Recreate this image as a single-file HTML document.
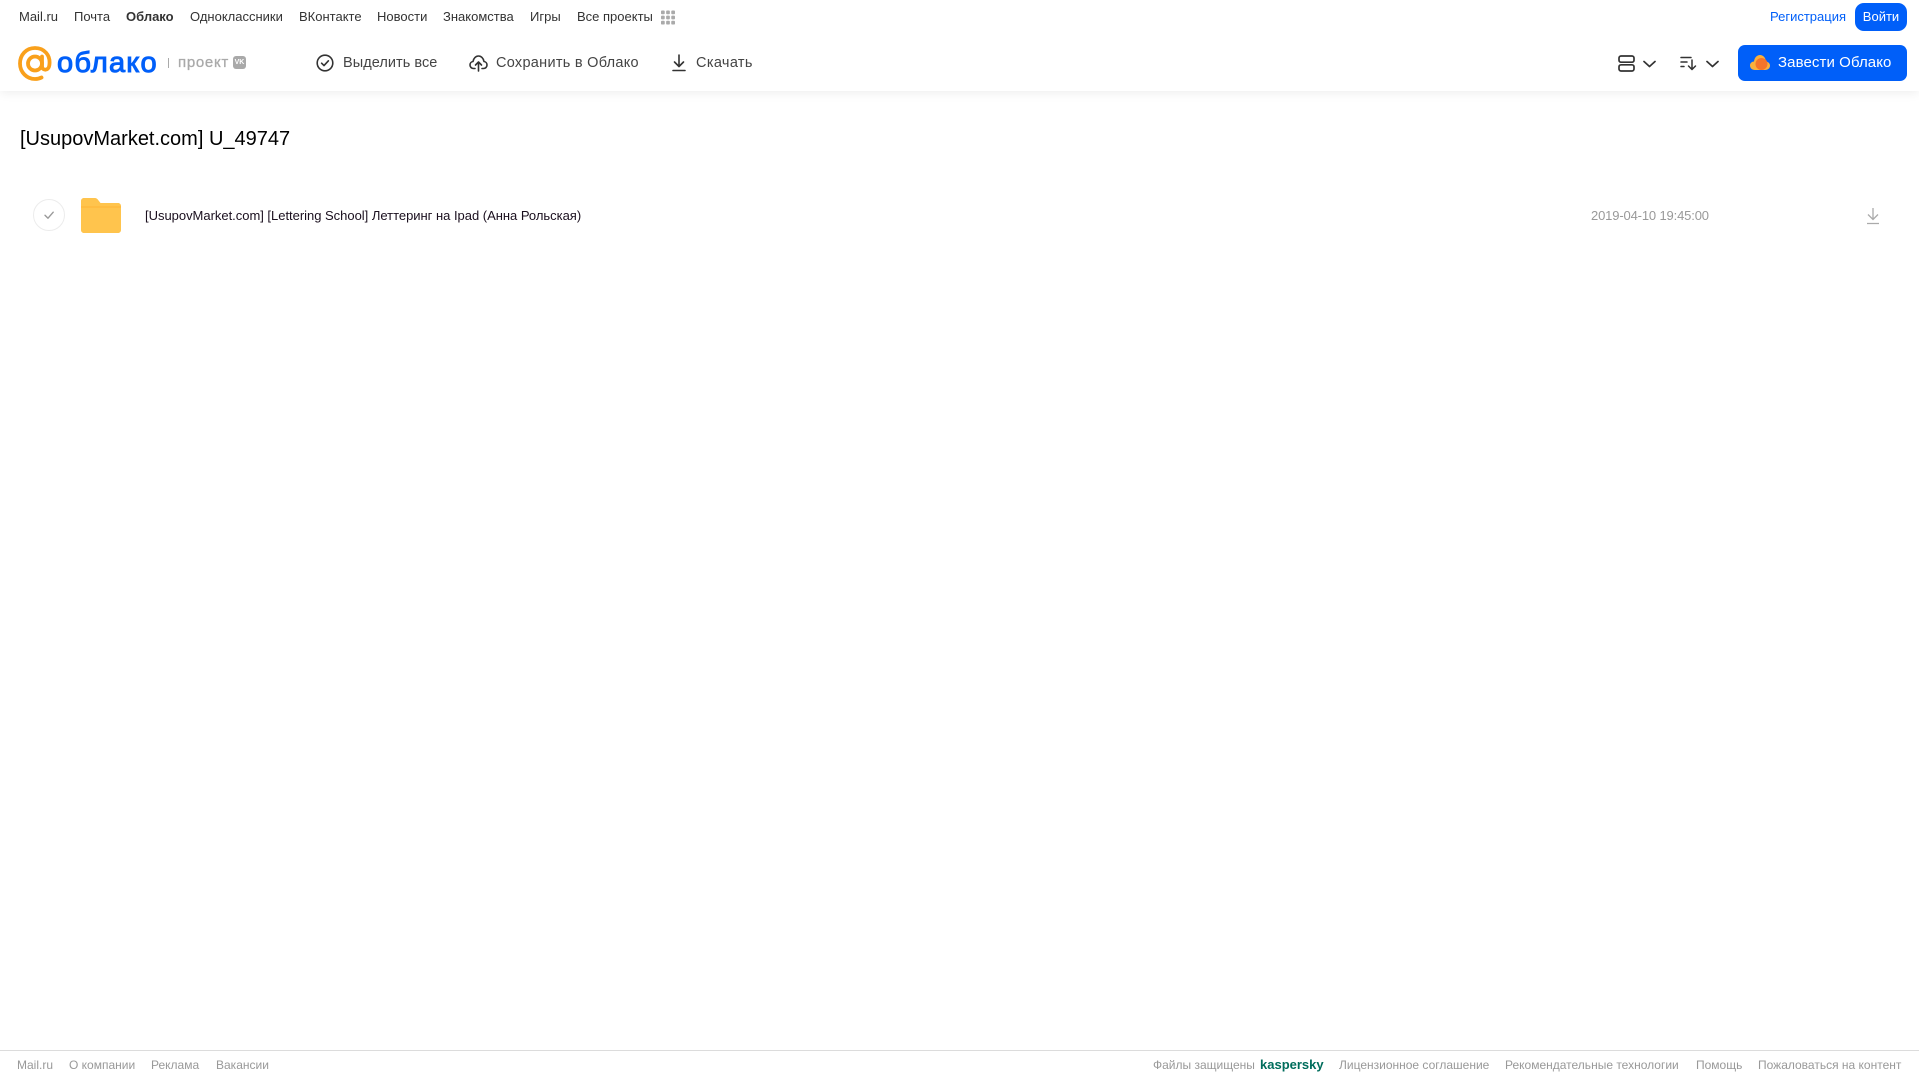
<!DOCTYPE html>
<html lang="ru"><head><meta charset="utf-8"><title>Облако</title>
<style>
html,body{margin:0;padding:0;background:#fff}
body{width:1919px;height:1079px;position:relative;overflow:hidden;font-family:"Liberation Sans",Arial,sans-serif;color:#2c2d2e}
.t{position:absolute;white-space:nowrap;line-height:20px}
.n{top:7px;font-size:13px;color:#333}
.b{top:53px;font-size:14.5px;color:#444;letter-spacing:.28px}
.f{top:1055px;font-size:12px;color:#999}
svg{position:absolute;display:block}
#hd{position:absolute;left:0;top:0;width:1919px;height:91px;background:#fff;box-shadow:0 2px 10px rgba(0,0,0,.07)}
</style></head><body>
<div id="hd"></div>
<span class="t n" style="left:19px">Mail.ru</span>
<span class="t n" style="left:74px">Почта</span>
<span class="t n" style="left:126px;font-weight:700">Облако</span>
<span class="t n" style="left:190px">Одноклассники</span>
<span class="t n" style="left:299px">ВКонтакте</span>
<span class="t n" style="left:377px">Новости</span>
<span class="t n" style="left:443px">Знакомства</span>
<span class="t n" style="left:530px">Игры</span>
<span class="t n" style="left:577px">Все проекты</span>
<svg style="left:661px;top:10px" width="14" height="15" viewBox="0 0 15 15" fill="#aaa"><rect x="0" y="0" width="4" height="4" rx="1"/><rect x="5.5" y="0" width="4" height="4" rx="1"/><rect x="11" y="0" width="4" height="4" rx="1"/><rect x="0" y="5.5" width="4" height="4" rx="1"/><rect x="5.5" y="5.5" width="4" height="4" rx="1"/><rect x="11" y="5.5" width="4" height="4" rx="1"/><rect x="0" y="11" width="4" height="4" rx="1"/><rect x="5.5" y="11" width="4" height="4" rx="1"/><rect x="11" y="11" width="4" height="4" rx="1"/></svg>
<span class="t n" style="left:1770px;color:#005ff9">Регистрация</span>
<div style="position:absolute;left:1855px;top:3px;width:52px;height:28px;background:#005ff9;border-radius:9px;color:#fff;font-size:13px;line-height:28px;text-align:center">Войти</div>

<svg style="left:18px;top:46px" width="34" height="35" viewBox="0 0 34 35" fill="none" stroke="#f9a01b" stroke-width="3.800"><circle cx="17" cy="17.5" r="7"/><path d="M24 10.5v9.5c0 5 6.500 5 7.300-.5C33 9 26 2 17 2 8 2 2 9 2 17.500 2 26.500 9 33 17 33c2.500 0 4.500-.5 6.500-1.500" stroke-linecap="round"/></svg>
<span class="t" style="left:57px;top:45px;line-height:36px;font-size:29px;font-weight:400;-webkit-text-stroke:1px #005ff9;color:#005ff9;letter-spacing:1.2px">облако</span>
<div style="position:absolute;left:168px;top:58px;width:1px;height:10px;background:#aaa"></div>
<span class="t" style="left:178px;top:53px;font-size:15px;font-weight:400;-webkit-text-stroke:.3px #a9a9a9;color:#a9a9a9;letter-spacing:.7px">проект</span>
<div style="position:absolute;left:233px;top:56px;width:13px;height:13px;background:#a9a9a9;border-radius:3px;color:#fff;font-size:7px;line-height:13px;text-align:center;font-weight:700">VK</div>

<svg style="left:316px;top:54px" width="18" height="18" viewBox="0 0 18 18" fill="none" stroke="#333" stroke-width="1.600"><circle cx="9" cy="9" r="7.800"/><path d="M5.600 9.200l2.400 2.400 4.400-4.800" stroke-linecap="round" stroke-linejoin="round"/></svg>
<span class="t b" style="left:343px;letter-spacing:.05px">Выделить все</span>
<svg style="left:469px;top:54px" width="19" height="18" viewBox="0 0 19 18" fill="none" stroke="#333" stroke-width="1.600" stroke-linecap="round" stroke-linejoin="round"><path d="M6 14.500H4.500C2.500 14.500 1 13 1 11c0-1.800 1.300-3.300 3-3.500C4.500 4.200 6.800 2 9.500 2s5 2.200 5.500 5.500c1.700.2 3 1.700 3 3.500 0 2-1.500 3.500-3.500 3.500H13"/><path d="M9.500 17V8.500M6.500 11l3-3 3 3"/></svg>
<span class="t b" style="left:496px">Сохранить в Облако</span>
<svg style="left:671px;top:54px" width="16" height="18" viewBox="0 0 16 18" fill="none" stroke="#333" stroke-width="1.600" stroke-linecap="round" stroke-linejoin="round"><path d="M8 1v11M3.500 8L8 12.500 12.500 8M2 16.500h12"/></svg>
<span class="t b" style="left:696px;letter-spacing:.35px">Скачать</span>

<svg style="left:1618px;top:55px" width="17" height="17" viewBox="0 0 17 17" fill="none" stroke="#333" stroke-width="1.700"><rect x="1" y="1" width="15" height="6.200" rx="2"/><rect x="1" y="9.800" width="15" height="6.200" rx="2"/></svg>
<svg style="left:1643px;top:60px" width="13" height="8" viewBox="0 0 13 8" fill="none" stroke="#333" stroke-width="1.700" stroke-linecap="round" stroke-linejoin="round"><path d="M1 1.500l5.500 5 5.500-5"/></svg>
<svg style="left:1680px;top:56px" width="17" height="15" viewBox="0 0 17 15" fill="none" stroke="#333" stroke-width="1.500" stroke-linecap="round" stroke-linejoin="round"><path d="M1 1.500h10M1 6h6M1 10.500h3M12 4v9.500M8.500 10l3.500 3.500 3.500-3.500"/></svg>
<svg style="left:1706px;top:60px" width="13" height="8" viewBox="0 0 13 8" fill="none" stroke="#333" stroke-width="1.700" stroke-linecap="round" stroke-linejoin="round"><path d="M1 1.500l5.500 5 5.500-5"/></svg>

<div style="position:absolute;left:1738px;top:45px;width:169px;height:36px;background:#005ff9;border-radius:7px"></div>
<svg style="left:1750px;top:54px" width="20" height="17" viewBox="0 0 20 17"><path d="M5 16C2 16 0 14 0 11.500 0 9 2 7.500 4 7.500 4.500 3.500 7 1 10 1s5.500 2.500 6 6.500c2.200.3 4 1.800 4 4 0 2.700-2 4.500-5 4.500z" fill="#fbb03b"/><circle cx="11.500" cy="10" r="6" fill="#f5742a"/></svg>
<span class="t b" style="left:1778px;color:#fff;font-size:15px;top:53px;letter-spacing:.09px">Завести Облако</span>

<span class="t" style="left:20px;top:126px;line-height:26px;font-size:20px;color:#000">[UsupovMarket.com] U_49747</span>

<svg style="left:33px;top:199px" width="32" height="32" viewBox="0 0 32 32" fill="none"><circle cx="16" cy="16" r="15.500" stroke="#ececec"/><path d="M12 16.300l3 2.900 5.200-6" stroke="#999" stroke-width="1.400" stroke-linecap="round" stroke-linejoin="round"/></svg>
<svg style="left:81px;top:198px" width="40" height="35" viewBox="0 0 41 35" preserveAspectRatio="none"><path d="M3 0h11c2 0 3 1 4 2.500L20 5h18c1.700 0 3 1.300 3 3v24c0 1.700-1.300 3-3 3H3c-1.700 0-3-1.300-3-3V3C0 1.300 1.300 0 3 0z" fill="#ffc44d"/><path d="M0 8h41v2H0z" fill="#ffb73a" opacity=".6"/></svg>
<span class="t" style="left:145px;top:206px;font-size:13px;color:#1a0f1e;letter-spacing:-.02px">[UsupovMarket.com] [Lettering School] Леттеринг на Ipad (Анна Рольская)</span>
<span class="t" style="left:1591px;top:206px;font-size:13px;color:#999;letter-spacing:-.15px">2019-04-10 19:45:00</span>
<svg style="left:1866px;top:207px" width="14" height="18" viewBox="0 0 14 18" fill="none" stroke="#aaa" stroke-width="1.300"><path d="M7 1v11M2 7.500L7 12.500 12 7.500M1 16.500h12"/></svg>

<div style="position:absolute;left:0;top:1050px;width:1919px;height:1px;background:#dcdcdc"></div>
<span class="t f" style="left:17px">Mail.ru</span>
<span class="t f" style="left:69px">О компании</span>
<span class="t f" style="left:151px">Реклама</span>
<span class="t f" style="left:216px">Вакансии</span>
<span class="t f" style="left:1153px">Файлы защищены</span>
<span class="t f" style="left:1260px;color:#006d5c;font-weight:700;font-size:13px">kaspersky</span>
<span class="t f" style="left:1339px">Лицензионное соглашение</span>
<span class="t f" style="left:1505px">Рекомендательные технологии</span>
<span class="t f" style="left:1696px">Помощь</span>
<span class="t f" style="left:1758px">Пожаловаться на контент</span>
</body></html>
